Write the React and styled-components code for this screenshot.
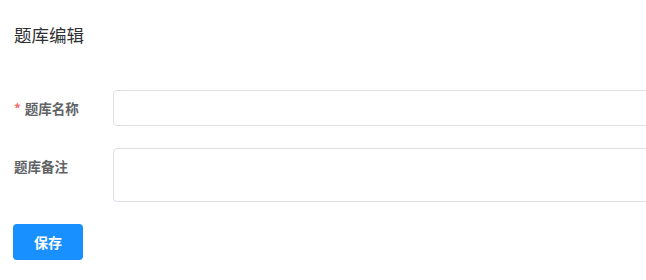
import React from "react";
import styled, { createGlobalStyle } from "styled-components";

const Global = createGlobalStyle`
  html, body { margin: 0; padding: 0; background: #fff; overflow: hidden; }
  body { font-family: "Noto Sans CJK SC", "Noto Sans", sans-serif; }
  * { box-sizing: border-box; }
`;

const Page = styled.div`
  padding: 0 0 0 13px;
  width: 646px;
  height: 280px;
  overflow: hidden;
`;

const Title = styled.div`
  height: 70px;
  padding-top: 23px;
  padding-left: 1px;
  font-size: 17.5px;
  line-height: 24px;
  color: #303133;
`;

const Form = styled.div`
  padding-top: 20px;
  display: flex;
  flex-direction: column;
  gap: 22px;
`;

const Row = styled.div`
  display: flex;
  align-items: flex-start;
`;

const Label = styled.label`
  width: 100px;
  flex: none;
  padding-left: 1px;
  line-height: 36px;
  font-size: 13.5px;
  font-weight: 700;
  color: #606266;
`;

const Star = styled.span`
  color: #f56c6c;
  margin-right: 4px;
  font-weight: 700;
`;

const Input = styled.input`
  width: 620px;
  flex: none;
  height: 36px;
  border: 1px solid #dcdfe6;
  border-radius: 4px;
  outline: none;
  padding: 0 15px;
  font-family: inherit;
  font-size: 14px;
`;

const Area = styled.textarea`
  width: 620px;
  flex: none;
  height: 54px;
  border: 1px solid #dcdfe6;
  border-radius: 4px;
  outline: none;
  padding: 5px 15px;
  resize: none;
  font-family: inherit;
  font-size: 14px;
  display: block;
`;

const Button = styled.button`
  width: 70px;
  height: 36px;
  border: none;
  border-radius: 4px;
  background: #1890ff;
  color: #fff;
  font-family: inherit;
  font-size: 14px;
  font-weight: 700;
  padding: 0;
  cursor: pointer;
`;

export default function App() {
  return (
    <Page>
      <Global />
      <Title>题库编辑</Title>
      <Form>
        <Row>
          <Label><Star>*</Star>题库名称</Label>
          <Input />
        </Row>
        <Row>
          <Label>题库备注</Label>
          <Area />
        </Row>
        <Row>
          <Button>保存</Button>
        </Row>
      </Form>
    </Page>
  );
}
